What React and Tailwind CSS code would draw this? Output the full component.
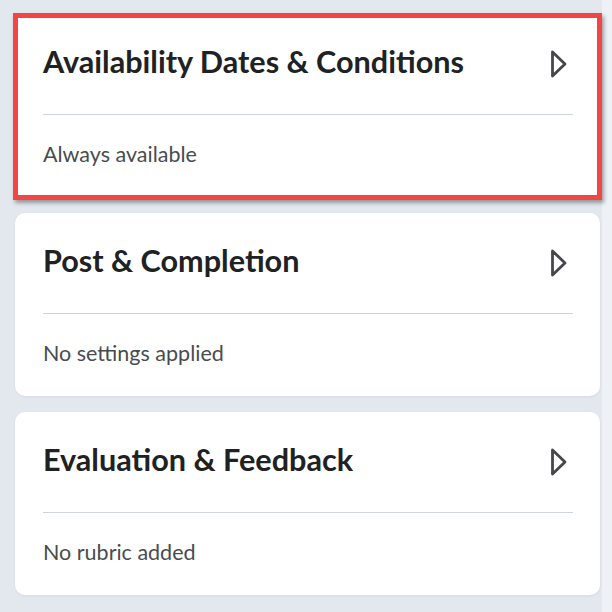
import React from "react";

const sections = [
  { title: "Availability Dates & Conditions", summary: "Always available", highlighted: true },
  { title: "Post & Completion", summary: "No settings applied" },
  { title: "Evaluation & Feedback", summary: "No rubric added" },
];

function Chevron() {
  return (
    <svg width="18" height="30" viewBox="0 0 18 30" className="shrink-0 mr-[5px] mt-[4px]">
      <path d="M2.5 3 L15 15 L2.5 27 Z" fill="none" stroke="#45474b" strokeWidth="2.8" strokeLinejoin="round" />
    </svg>
  );
}

function SectionCard({ title, summary, highlighted }) {
  return (
    <div className="relative bg-white rounded-[10px] h-[183px] pl-[28px] pr-[27px] pt-[29px] shadow-[0_1px_3px_rgba(0,0,0,0.06)]">
      <div className="flex items-center justify-between h-[37px]">
        <h2 className="text-[30.6px] leading-[37px] font-bold text-[#202122]">{title}</h2>
        <Chevron />
      </div>
      <div className="mt-[34px] h-px bg-[#cdd5dc]" />
      <p className="mt-[26px] text-[21.5px] leading-[26px] text-[#494c4e]">{summary}</p>
      {highlighted && (
        <div className="absolute -top-[1px] -left-[2px] -right-[2px] -bottom-[3px] border-[5px] border-[#f24545] shadow-[2px_3px_4px_rgba(0,0,0,0.35)] pointer-events-none" />
      )}
    </div>
  );
}

export default function App() {
  return (
    <div className="w-[612px] h-[612px] bg-[#e3e8ef] flex overflow-hidden" style={{ fontFamily: "Lato, 'Noto Sans', sans-serif" }}>
      <div className="w-[602px] pl-[15px] pr-[2px] pt-[14px] flex flex-col gap-[16px]">
        {sections.map((s) => (
          <SectionCard key={s.title} {...s} />
        ))}
      </div>
      <div className="w-[10px] bg-[#eef1f6]" />
    </div>
  );
}
